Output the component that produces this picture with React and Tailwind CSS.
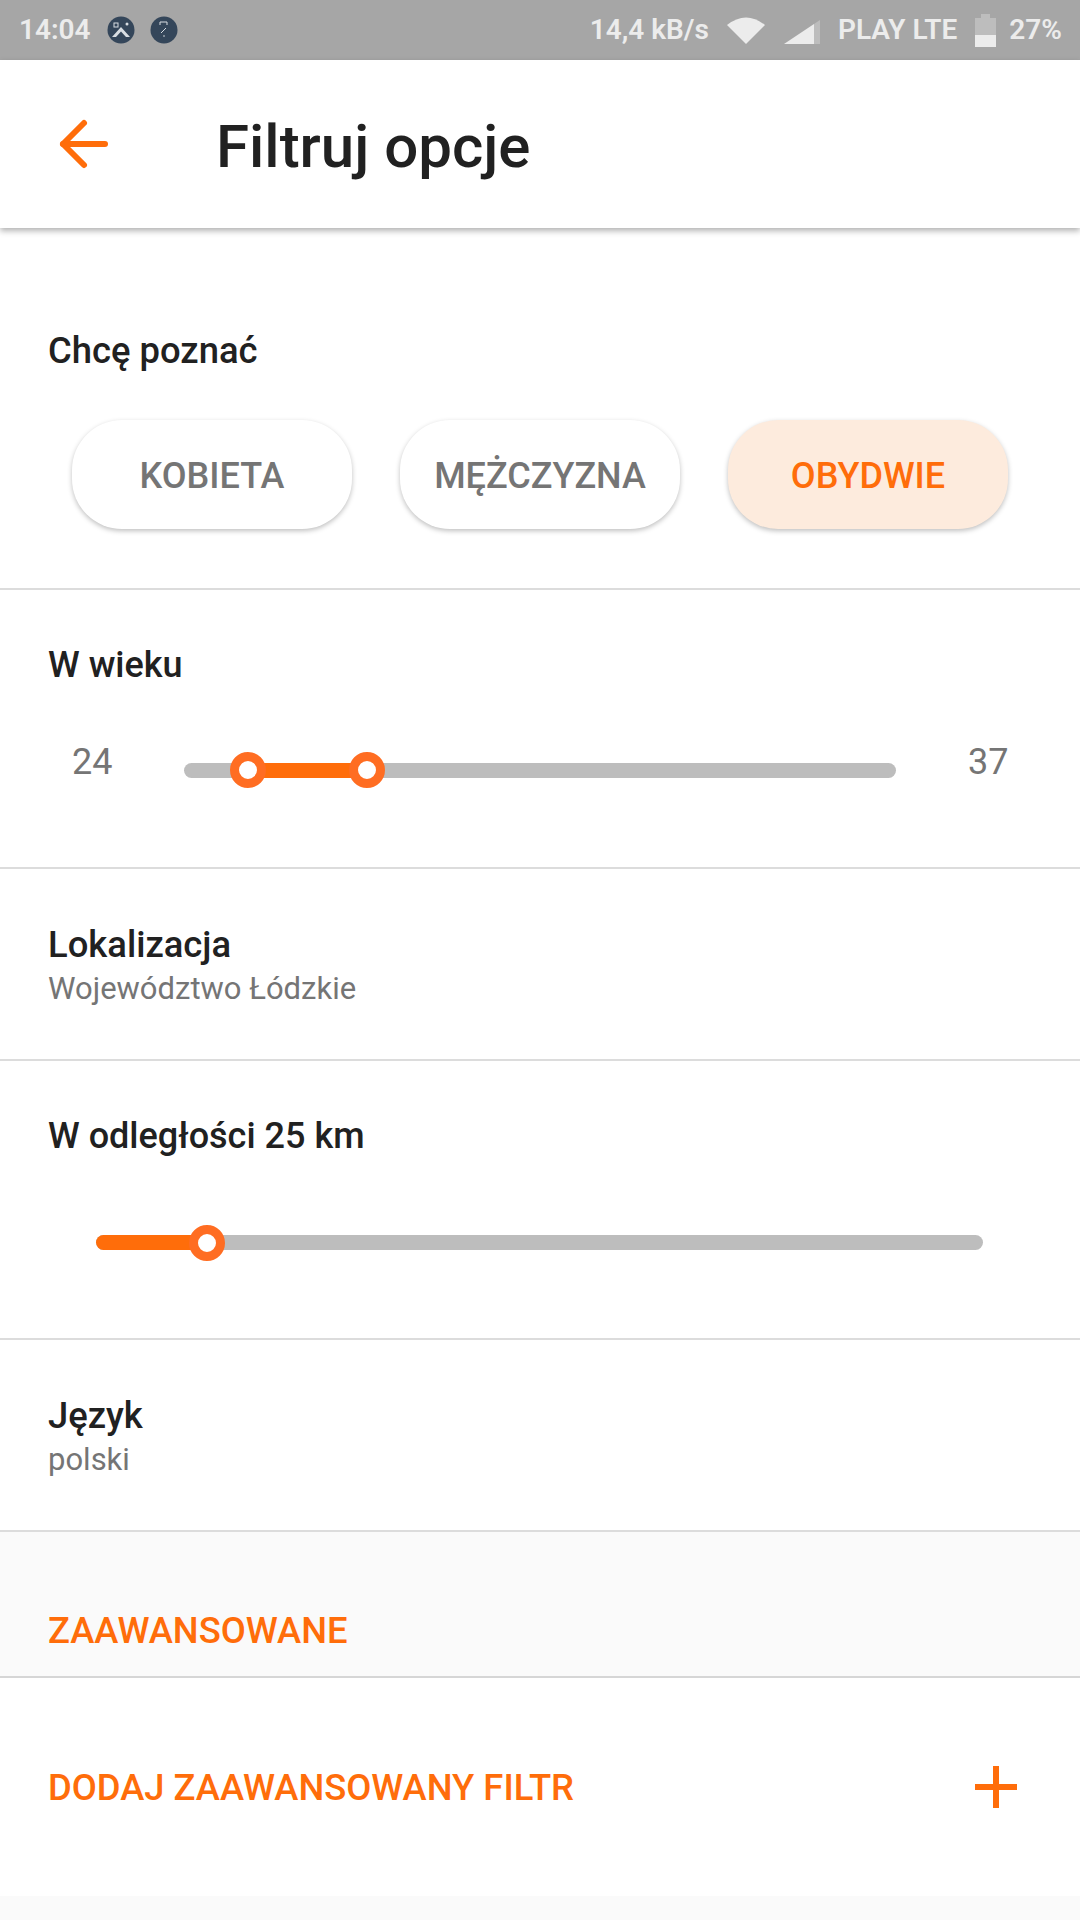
import { ArrowLeft } from "lucide-react";

function Avatar({ children }) {
  return (
    <svg width="28" height="28" viewBox="0 0 28 28" className="shrink-0">
      <circle cx="14" cy="14" r="13.5" fill="#34465a" />
      {children}
    </svg>
  );
}

function StatusBar() {
  return (
    <div className="flex h-[60px] items-center bg-[#a6a6a6] pl-[19px] pr-[18px] text-[28px] font-semibold text-[#ececec]">
      <span className="w-[88px]">14:04</span>
      <div className="flex gap-[15px]">
        <Avatar>
          <path d="M5 21 L14 11 L23 21 L19 21 L14 15.5 L9 21 Z" fill="#d8dde2" />
          <rect x="7" y="7" width="4" height="4" fill="none" stroke="#d8dde2" strokeWidth="1" />
          <circle cx="20" cy="8" r="1.5" fill="#d8dde2" />
        </Avatar>
        <Avatar>
          <path d="M10 9 V6 H17 V9 M11 17 L16 12" fill="none" stroke="#d8dde2" strokeWidth="1" />
          <circle cx="14" cy="20" r="0.8" fill="#d8dde2" />
        </Avatar>
      </div>
      <div className="ml-auto flex items-center">
        <span>14,4 kB/s</span>
        <svg width="38" height="28" viewBox="0 0 38 28" className="ml-[18px]">
          <path d="M0 9 Q19 -6 38 9 L19 28 Z" fill="#ececec" />
        </svg>
        <svg width="36" height="24" viewBox="0 0 36 24" className="ml-[19px] mt-[3px]">
          <path d="M0 24 L30 4 V24 Z" fill="#ececec" />
          <path d="M30 4 L36 0 V24 H30 Z" fill="#bdbdbd" />
        </svg>
        <span className="ml-[18px]">PLAY LTE</span>
        <svg width="21" height="33" viewBox="0 0 21 33" className="ml-[18px]">
          <path d="M6 0 H15 V4 H21 V21 H0 V4 H6 Z" fill="#bdbdbd" />
          <rect y="21" width="21" height="12" fill="#ececec" />
        </svg>
        <span className="ml-[13px]">27%</span>
      </div>
    </div>
  );
}

function Choice({ label, active }) {
  return (
    <div
      className={
        "flex h-[109px] w-[280px] items-center justify-center rounded-[50px] pt-[2px] text-[36px] font-medium shadow-[0_2px_5px_rgba(0,0,0,0.25)] " +
        (active ? "bg-[#fdebdd] text-[#ff6d0a]" : "bg-white text-[#757575]")
      }
    >
      {label}
    </div>
  );
}

function Thumb({ left }) {
  return (
    <div
      className="absolute top-1/2 h-[36px] w-[36px] -translate-x-1/2 -translate-y-1/2 rounded-full border-[9px] border-[#ff6d22] bg-white"
      style={{ left }}
    />
  );
}

function Slider({ from, to, className }) {
  return (
    <div className={"relative h-[15px] rounded-full bg-[#bdbdbd] " + className}>
      <div
        className="absolute inset-y-0 rounded-full bg-[#ff6d0a]"
        style={{ left: from, width: to - from }}
      />
      {from > 0 && <Thumb left={from} />}
      <Thumb left={to} />
    </div>
  );
}

function Label({ children, size = "text-[36.4px]" }) {
  return <div className={size + " font-medium leading-[46px] text-[#212121]"}>{children}</div>;
}

function Row({ title, sub, className }) {
  return (
    <div className={"border-b-2 border-[#dcdcdc] px-[48px] " + className}>
      <Label>{title}</Label>
      <div className="text-[31px] leading-[42px] text-[#757575]">{sub}</div>
    </div>
  );
}

export default function App() {
  return (
    <div className="flex h-[1920px] w-[1080px] flex-col overflow-hidden bg-[#fafafa] font-['Roboto',sans-serif]">
      <StatusBar />
      <div className="relative z-10 flex h-[168px] items-center bg-white shadow-[0_3px_6px_rgba(0,0,0,0.3)]">
        <ArrowLeft size={72} strokeWidth={2} className="ml-[48px] text-[#ff6d0a]" />
        <h1 className="ml-[96px] pt-[6px] text-[60px] font-medium text-[#212121]">Filtruj opcje</h1>
      </div>

      <div className="bg-white">
        <div className="h-[362px] border-b-2 border-[#dcdcdc] px-[48px] pt-[100px]">
          <Label>Chcę poznać</Label>
          <div className="mt-[46px] ml-[24px] flex gap-[48px]">
            <Choice label="KOBIETA" />
            <Choice label="MĘŻCZYZNA" />
            <Choice label="OBYDWIE" active />
          </div>
        </div>

        <div className="h-[279px] border-b-2 border-[#dcdcdc] px-[48px] pt-[52px]">
          <Label size="text-[36px]">W wieku</Label>
          <div className="mt-[51px] flex items-center text-[36px] leading-[46px] text-[#757575]">
            <span className="ml-[24px] w-[112px]">24</span>
            <Slider from={64} to={183} className="mt-[16px] w-[712px]" />
            <span className="ml-[72px]">37</span>
          </div>
        </div>

        <Row title="Lokalizacja" sub="Województwo Łódzkie" className="h-[192px] pt-[53px]" />

        <div className="h-[279px] border-b-2 border-[#dcdcdc] px-[48px] pt-[52px]">
          <Label size="text-[36px]">W odległości 25 km</Label>
          <Slider from={0} to={111} className="mt-[76px] ml-[48px] w-[887px]" />
        </div>

        <Row title="Język" sub="polski" className="h-[192px] pt-[53px]" />
      </div>

      <div className="flex h-[146px] items-end border-b-2 border-[#d6d6d6] bg-[#fafafa] px-[48px] pb-[22px] text-[36.4px] font-medium leading-[46px] text-[#ff6d0a]">
        ZAAWANSOWANE
      </div>

      <div className="flex h-[218px] items-center justify-between bg-white pl-[48px] pr-[63px] text-[36.4px] font-medium text-[#ff6d0a]">
        <span className="pt-[2px]">DODAJ ZAAWANSOWANY FILTR</span>
        <svg width="42" height="42" viewBox="0 0 42 42">
          <path d="M18 0 H24 V18 H42 V24 H24 V42 H18 V24 H0 V18 H18 Z" fill="#ff6d0a" />
        </svg>
      </div>
    </div>
  );
}
